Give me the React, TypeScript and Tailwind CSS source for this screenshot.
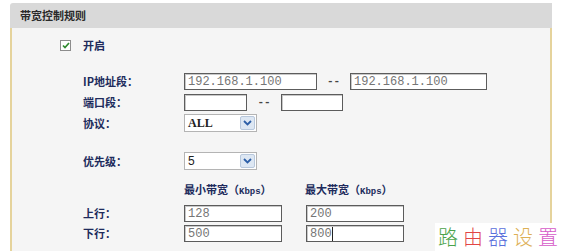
import React from 'react';

const cjk = '"Noto Sans CJK SC", "Noto Sans", sans-serif';

const Label = ({ children }: { children: React.ReactNode }) => (
  <div
    className="w-[101px] shrink-0 text-[11px] font-bold text-[#202b5c] leading-none"
    style={{ fontFamily: cjk }}
  >
    {children}
  </div>
);

const TextBox = ({ w, value, cursor }: { w: string; value?: string; cursor?: boolean }) => (
  <div
    className={`${w} h-full bg-white border border-[#5c5c5c] shadow-[inset_1px_1px_0_#c8c8c8] flex items-center pl-[3px] text-[12px] text-[#757575] leading-none font-['Liberation_Mono',monospace]`}
  >
    <span>{value}</span>
    {cursor && <span className="w-px h-[14px] bg-[#222]" />}
  </div>
);

const SelectBox = ({ value, serif }: { value: string; serif?: boolean }) => (
  <div className="w-[73px] h-full bg-white border border-[#b4b4b4] flex items-center justify-between pl-[3px] pr-px">
    <span
      className={`text-[12px] text-[#222] leading-none ${serif ? "font-bold font-['Liberation_Serif',serif]" : "font-['Liberation_Sans',sans-serif]"}`}
    >
      {value}
    </span>
    <div className="w-[15px] h-[14px] bg-[#dde7f3] border border-[#b8c8dc] rounded-[2px] flex items-center justify-center">
      <svg width="9" height="6" viewBox="0 0 9 6">
        <path d="M1 1 L4.5 4.5 L8 1" fill="none" stroke="#2d5fa8" strokeWidth="1.8" />
      </svg>
    </div>
  </div>
);

const Dash = ({ w }: { w: string }) => (
  <div className={`${w} text-center text-[11px] font-bold text-[#444] leading-none font-['Liberation_Mono',monospace]`}>--</div>
);

const BwHead = ({ text }: { text: string }) => (
  <div className="text-[11px] font-bold text-[#202b5c] leading-none" style={{ fontFamily: cjk }}>
    {text}（<span className="text-[9px] font-['Liberation_Mono',monospace]">Kbps</span>）
  </div>
);

export default function App() {
  return (
    <div className="relative w-[561px] h-[251px] bg-white overflow-hidden pl-[10px] pr-[9px] pt-[3px] flex flex-col">
      {/* panel header */}
      <div
        className="h-[25px] shrink-0 bg-[#d9d9d9] rounded-tl-[3px] flex items-center pl-[10px] text-[11px] font-bold text-[#2a2a2a]"
        style={{ fontFamily: cjk }}
      >
        带宽控制规则
      </div>

      {/* panel body */}
      <div className="flex-1 bg-[#f5f5f5] border-l-2 border-r-2 border-[#e5d39c] flex flex-col pt-[11px]">
        {/* enable */}
        <div className="h-[13px] flex items-center pl-[48px] gap-[12px]">
          <div className="w-[11px] h-[11px] bg-white border border-[#8c8c8c] flex items-center justify-center">
            <svg width="8" height="7" viewBox="0 0 8 7">
              <path d="M1 3.5 L3 5.5 L7 1" fill="none" stroke="#2f8a2f" strokeWidth="1.7" />
            </svg>
          </div>
          <span className="text-[11px] font-bold text-[#202b5c] leading-none" style={{ fontFamily: cjk }}>
            开启
          </span>
        </div>

        <div className="pl-[71px] flex flex-col">
          <div className="mt-[21px] h-[17px] flex items-center">
            <Label>IP地址段：</Label>
            <TextBox w="w-[133px]" value="192.168.1.100" />
            <Dash w="w-[33px]" />
            <TextBox w="w-[137px]" value="192.168.1.100" />
          </div>

          <div className="mt-[4px] h-[17px] flex items-center">
            <Label>端口段：</Label>
            <TextBox w="w-[63px]" />
            <Dash w="w-[34px]" />
            <TextBox w="w-[62px]" />
          </div>

          <div className="mt-[3px] h-[18px] flex items-center">
            <Label>协议：</Label>
            <SelectBox value="ALL" serif />
          </div>

          <div className="mt-[20px] h-[18px] flex items-center">
            <Label>优先级：</Label>
            <SelectBox value="5" />
          </div>

          <div className="mt-[13px] h-[14px] flex items-center">
            <div className="w-[101px] shrink-0" />
            <div className="w-[121px]">
              <BwHead text="最小带宽" />
            </div>
            <BwHead text="最大带宽" />
          </div>

          <div className="mt-[8px] h-[17px] flex items-center gap-[24px]">
            <Label>上行：</Label>
            <div className="-ml-[24px] flex h-full gap-[24px]">
              <TextBox w="w-[98px]" value="128" />
              <TextBox w="w-[98px]" value="200" />
            </div>
          </div>

          <div className="mt-[3px] h-[17px] flex items-center gap-[24px]">
            <Label>下行：</Label>
            <div className="-ml-[24px] flex h-full gap-[24px]">
              <TextBox w="w-[98px]" value="500" />
              <TextBox w="w-[98px]" value="800" cursor />
            </div>
          </div>
        </div>
      </div>

      {/* watermark */}
      <div
        className="absolute right-0 bottom-0 w-[126px] h-[28px] bg-white flex items-center pl-[3px] gap-[5px] text-[20px] font-light leading-none"
        style={{ fontFamily: '"Noto Sans CJK SC", serif' }}
      >
        <span className="text-[#4aa34a]">路</span>
        <span className="text-[#e24545]">由</span>
        <span className="text-[#5a70dc]">器</span>
        <span className="text-[#ddb055]">设</span>
        <span className="text-[#d659c8]">置</span>
      </div>
    </div>
  );
}
